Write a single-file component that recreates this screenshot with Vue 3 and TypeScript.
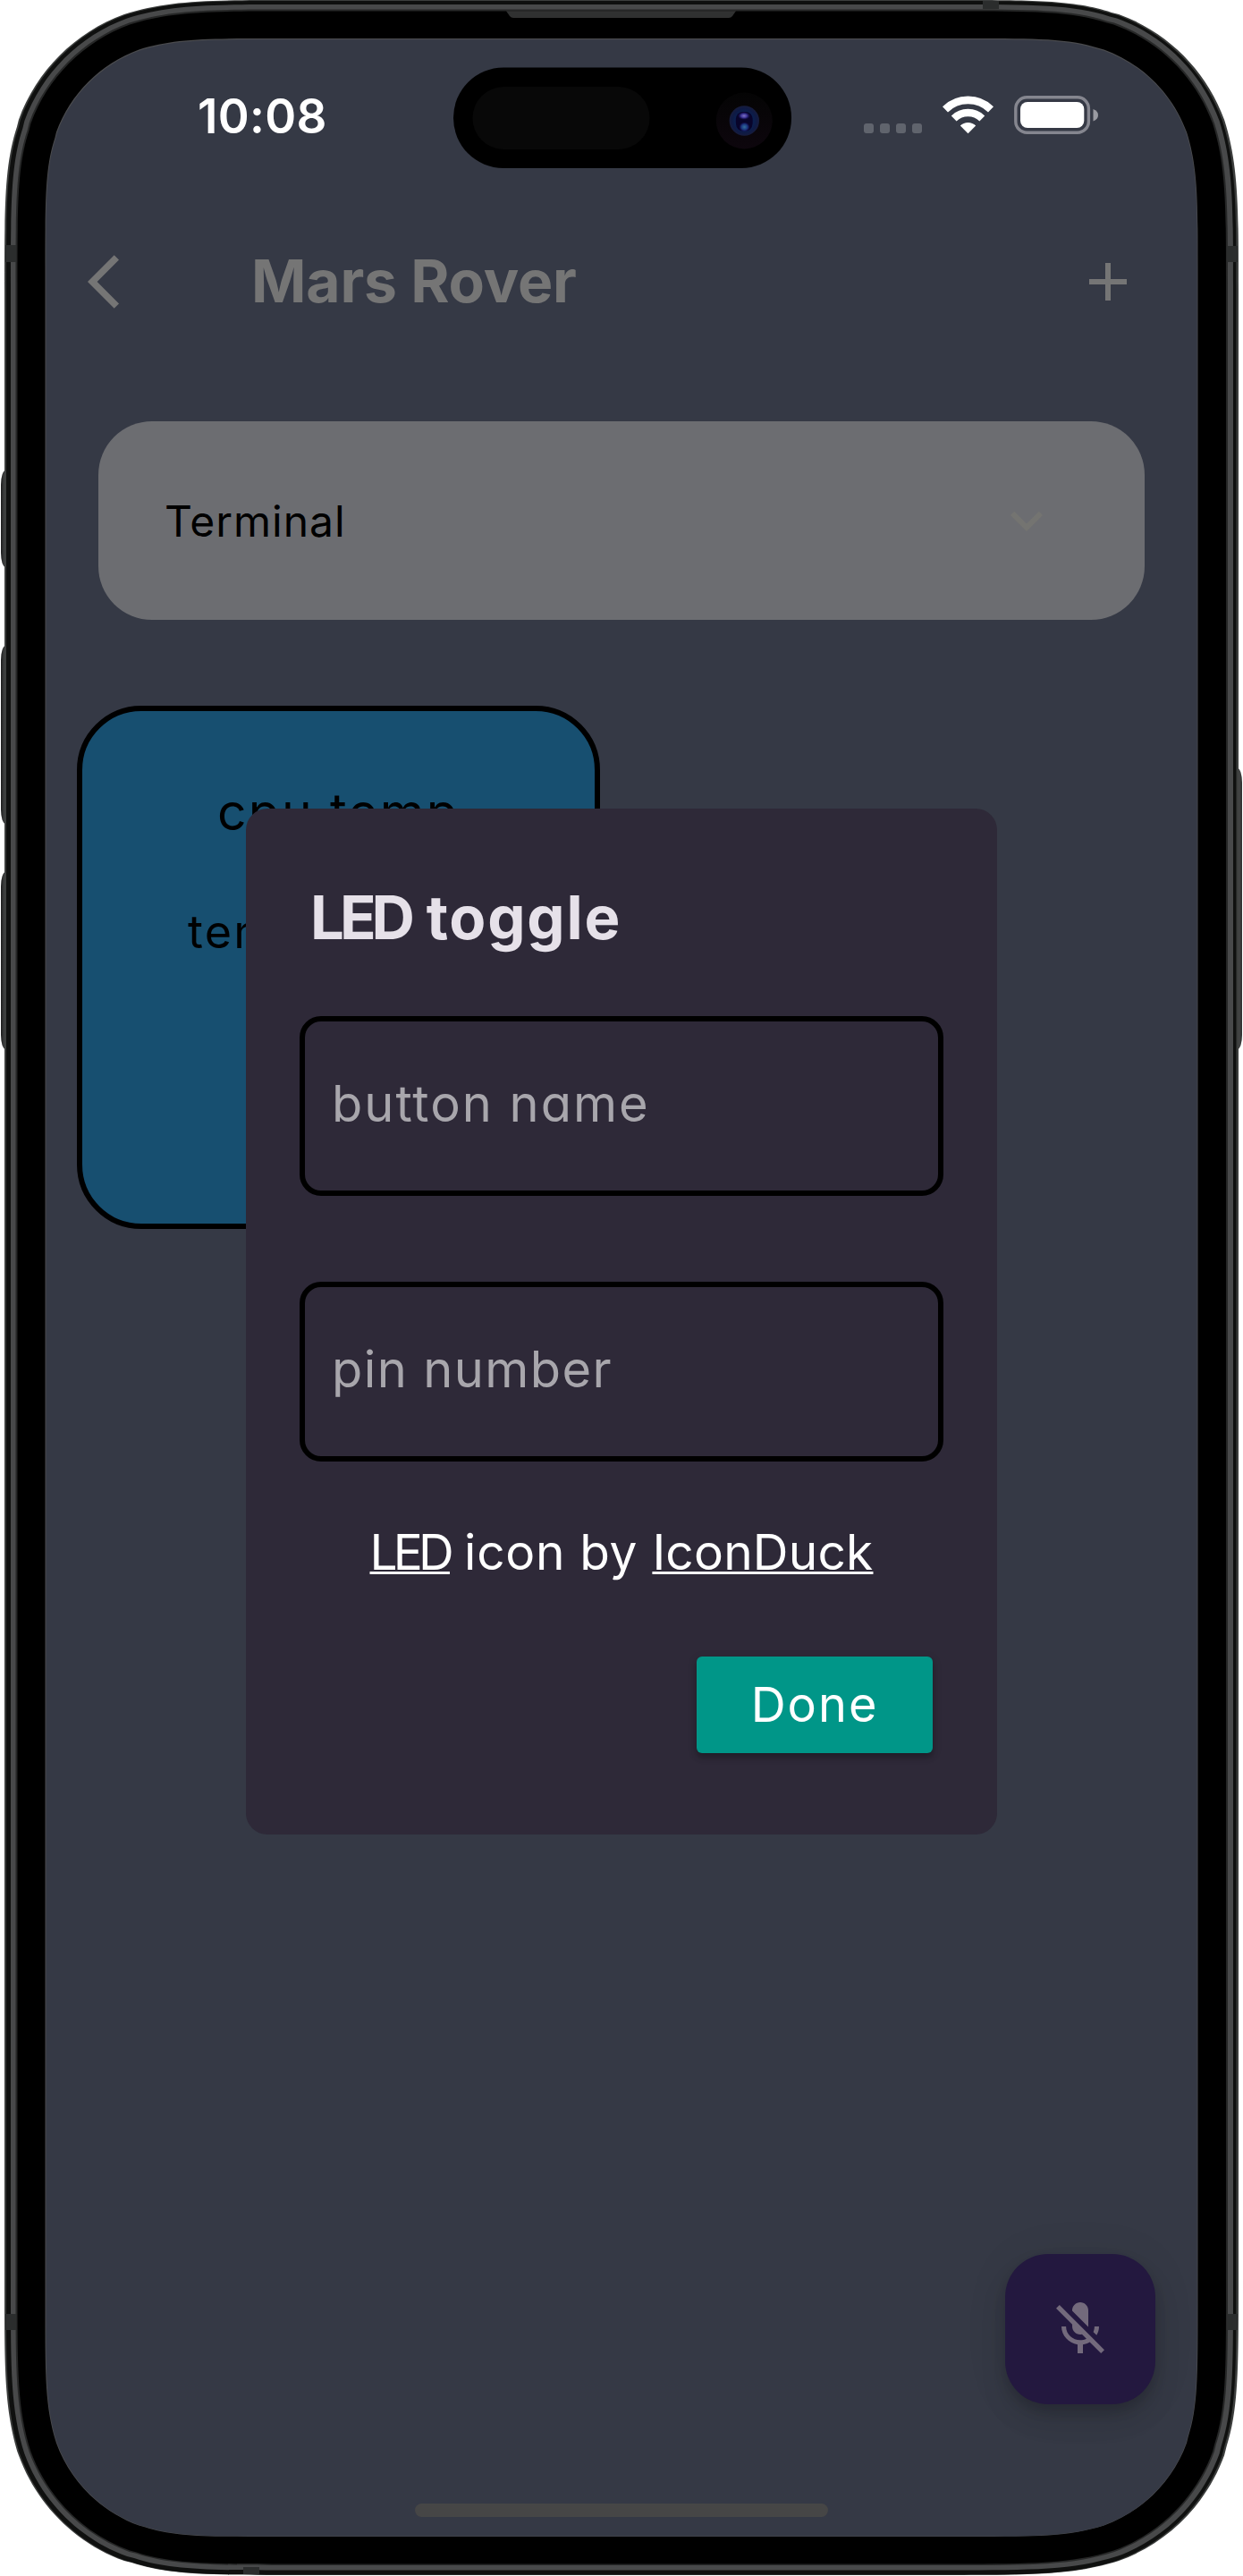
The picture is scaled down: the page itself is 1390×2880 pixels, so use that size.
<script setup lang="ts">
import { ref } from 'vue'

interface Layer {
  left: number
  top: number
  right: number
  bottom: number
  radius: number
  fill: string
}

// Rounded rectangle with continuous-curvature corners.
function squircle(l: Layer): string {
  const { left: x0, top: y0, right: x1, bottom: y1, radius: r } = l
  const corner = (cx: number, cy: number, ax: number, ay: number, bx: number, by: number): string => {
    const p = (a: number, b: number) =>
      `${(cx + ax * a * r + bx * b * r).toFixed(2)} ${(cy + ay * a * r + by * b * r).toFixed(2)}`
    return (
      `L${p(1.5287, 0)} C${p(1.0885, 0)} ${p(0.8684, 0)} ${p(0.6699, 0.0655)} L${p(0.6315, 0.0749)} ` +
      `C${p(0.3728, 0.1691)} ${p(0.1691, 0.3728)} ${p(0.0749, 0.6315)} ` +
      `C${p(0, 0.8684)} ${p(0, 1.0885)} ${p(0, 1.5287)} `
    )
  }
  const body =
    corner(x1, y0, -1, 0, 0, 1) +
    corner(x1, y1, 0, -1, -1, 0) +
    corner(x0, y1, 1, 0, 0, -1) +
    corner(x0, y0, 0, 1, 1, 0)
  return 'M' + body.slice(1) + 'Z'
}

const layers: Layer[] = [
  { left: 5, top: 0, right: 1385, bottom: 2879, radius: 212, fill: '#3c3e3d' },
  { left: 7, top: 1, right: 1382.5, bottom: 2878.5, radius: 211, fill: '#0f100f' },
  { left: 12, top: 5, right: 1379, bottom: 2873.5, radius: 206, fill: '#48494a' },
  { left: 17.5, top: 10.5, right: 1373, bottom: 2868, radius: 201, fill: '#262727' },
  { left: 19.5, top: 12.5, right: 1371, bottom: 2866.5, radius: 199, fill: '#000000' },
  { left: 50.5, top: 43, right: 1339.5, bottom: 2836, radius: 166, fill: '#4a4b4e' },
  { left: 51.5, top: 44.3, right: 1338.7, bottom: 2835.5, radius: 165, fill: '#353945' }
]

const keysLeft = [
  { y: 526, h: 108 },
  { y: 722, h: 199 },
  { y: 975, h: 198 }
]

const buttonName = ref('')
const pinNumber = ref('')
</script>

<template>
  <div class="device">
    <svg class="frame" viewBox="0 0 1390 2880" width="1390" height="2880" aria-hidden="true">
      <defs>
        <linearGradient id="side" x1="0" x2="1" y1="0" y2="0">
          <stop offset="0" stop-color="#1b1c1c" />
          <stop offset="0.5" stop-color="#4b4d4d" />
          <stop offset="1" stop-color="#303131" />
        </linearGradient>
        <radialGradient id="lens">
          <stop offset="0" stop-color="#0a0830" />
          <stop offset="0.5" stop-color="#0a0a3a" />
          <stop offset="0.62" stop-color="#0b1f4d" />
          <stop offset="0.8" stop-color="#0e1a45" />
          <stop offset="1" stop-color="#171c3c" />
        </radialGradient>
        <radialGradient id="glint-top">
          <stop offset="0" stop-color="#9a8fe8" />
          <stop offset="0.5" stop-color="#4a40b0" />
          <stop offset="1" stop-color="#1a1468" stop-opacity="0" />
        </radialGradient>
        <radialGradient id="glint-low">
          <stop offset="0" stop-color="#3f86b8" />
          <stop offset="0.6" stop-color="#1d3f90" />
          <stop offset="1" stop-color="#2a1880" stop-opacity="0" />
        </radialGradient>
        <linearGradient id="ring" x1="0" x2="0" y1="0" y2="1">
          <stop offset="0" stop-color="#040404" />
          <stop offset="1" stop-color="#0d060d" />
        </linearGradient>
      </defs>
      <rect v-for="k in keysLeft" :key="k.y" x="1" :y="k.y" width="10" :height="k.h" rx="5" ry="16" fill="url(#side)" />
      <rect x="1379" y="859" width="10" height="314" rx="5" ry="16" fill="url(#side)" />
      <path v-for="(l, i) in layers" :key="i" :d="squircle(l)" :fill="l.fill" />
      <g fill="#2b2d2d">
        <rect x="6" y="274" width="12" height="19" />
        <rect x="1372" y="275" width="12" height="18" />
        <rect x="6" y="2587" width="12" height="18" />
        <rect x="1372" y="2587" width="12" height="18" />
        <rect x="1099" y="1" width="18" height="9" />
        <rect x="272" y="2870" width="18" height="8" />
      </g>
      <path d="M566 12.3H823L819 18Q817.500 20 815 20H574Q571.500 20 570 18Z" fill="#303131" />
      <rect x="507" y="75.500" width="378" height="112.500" rx="56" fill="#000" />
      <rect x="528.500" y="97" width="198" height="70" rx="35" fill="#080808" />
      <circle cx="832.300" cy="135" r="31.500" fill="url(#ring)" />
      <circle cx="832.300" cy="135" r="16.700" fill="url(#lens)" />
      <rect x="823" y="125" width="18.500" height="21.500" rx="8" fill="#08042a" />
      <ellipse cx="832" cy="129.500" rx="7" ry="4.500" fill="url(#glint-top)" opacity="0.8" />
      <ellipse cx="832.500" cy="142" rx="6" ry="5.500" fill="url(#glint-low)" opacity="0.8" />
    </svg>

    <main class="screen">
      <div class="status">
        <time class="clock">10:08</time>
        <div class="signals">
          <span class="dots"><i v-for="n in 4" :key="n"></i></span>
          <svg class="wifi" width="58" height="43" viewBox="0 0 58 43">
            <g fill="none" stroke="#fff">
              <path d="M3 15.300A36.500 36.500 0 0 1 54 15.300" stroke-width="8.600" />
              <path d="M12.700 25.500A22.600 22.600 0 0 1 44.300 25.500" stroke-width="8.400" />
            </g>
            <path d="M28.500 42.200L19.800 33.500A12.400 12.400 0 0 1 37.200 33.500Z" fill="#fff" />
          </svg>
          <svg class="battery" width="95" height="43" viewBox="0 0 95 43">
            <rect x="1.800" y="1.800" width="81.600" height="39.400" rx="12.500" fill="none" stroke="#85868f" stroke-width="3.400" />
            <rect x="7" y="7" width="71.300" height="29" rx="8" fill="#fff" />
            <path d="M88.500 15Q94 17 94 21.700T88.500 28.500Z" fill="#9a9ba2" />
          </svg>
        </div>
      </div>

      <header class="bar">
        <svg class="back" width="72" height="72" viewBox="0 0 24 24">
          <path d="M11.670 3.870L9.900 2.100 0 12l9.900 9.900 1.770-1.770L3.540 12z" fill="#757575" />
        </svg>
        <h1>Mars Rover</h1>
        <svg width="72" height="72" viewBox="0 0 24 24">
          <path d="M19 13h-6v6h-2v-6H5v-2h6V5h2v6h6v2z" fill="#757575" />
        </svg>
      </header>

      <section class="picker">
        <span>Terminal</span>
        <svg width="72" height="72" viewBox="0 0 24 24">
          <path d="M7.410 8.590L12 13.170l4.590-4.580L18 10l-6 6-6-6z" fill="#747471" />
        </svg>
      </section>

      <section class="tile">
        <p class="tile-name">cpu temp</p>
        <p class="tile-value">tem</p>
      </section>

      <footer class="bottom">
        <button class="mic" aria-label="Microphone off">
          <svg width="72" height="72" viewBox="0 0 24 24">
            <path
              d="M19 11h-1.700c0 .74-.16 1.430-.43 2.050l1.230 1.230c.56-.98.9-2.090.9-3.280zm-4.020.17c0-.06.02-.11.02-.17V5c0-1.660-1.340-3-3-3S9 3.340 9 5v.18l5.980 5.990zM4.270 3L3 4.270l6.010 6.010V11c0 1.660 1.330 3 2.990 3 .22 0 .44-.03.65-.08l1.660 1.660c-.71.33-1.500.52-2.310.52-2.760 0-5.300-2.100-5.300-5.100H5c0 3.410 2.720 6.230 6 6.720V21h2v-3.280c.91-.13 1.770-.45 2.540-.9L19.730 21 21 19.730 4.270 3z"
              fill="#736a7c"
            />
          </svg>
        </button>
        <div class="home"></div>
      </footer>
    </main>

    <form class="dialog" @submit.prevent>
      <h2><span class="caps">LED</span> toggle</h2>
      <input v-model="buttonName" class="field name" placeholder="button name" />
      <input v-model="pinNumber" class="field pin" placeholder="pin number" />
      <p class="credit"><a class="caps">LED</a> icon by <a class="site">IconDuck</a></p>
      <button class="done">Done</button>
    </form>
  </div>
</template>

<style>
body {
  margin: 0;
  background: #fff;
}
</style>

<style scoped>
.device {
  position: relative;
  width: 1390px;
  height: 2880px;
  overflow: hidden;
  font-family: Inter, 'Liberation Sans', sans-serif;
}
.frame {
  position: absolute;
  inset: 0;
  display: block;
}
.screen {
  position: relative;
  box-sizing: border-box;
  width: 1390px;
  height: 2880px;
  padding: 44px 51px 45px;
  display: flex;
  flex-direction: column;
}
h1,
h2,
p {
  margin: 0;
}
.status {
  height: 166px;
  display: flex;
  justify-content: space-between;
  align-items: flex-start;
  padding: 54px 110px 0 170px;
  box-sizing: border-box;
}
.clock {
  color: #fff;
  font-size: 53px;
  line-height: 64px;
  font-weight: 600;
  letter-spacing: 0.3px;
}
.signals {
  display: flex;
  align-items: flex-start;
  padding-top: 9px;
}
.dots {
  display: flex;
  gap: 7px;
  margin: 31px 23px 0 0;
}
.dots i {
  width: 11px;
  height: 11px;
  border-radius: 3px;
  background: #60646d;
}
.wifi {
  margin-right: 22px;
}
.bar {
  height: 209px;
  display: flex;
  align-items: center;
  padding: 0 64px 0 47px;
}
.bar h1 {
  flex: 1;
  margin: -2px 0 0 111px;
  color: #757575;
  font-size: 66px;
  line-height: 80px;
  font-weight: 700;
  letter-spacing: -0.2px;
}
.picker {
  margin: 52px 59px 0;
  box-sizing: border-box;
  height: 222px;
  border-radius: 60px;
  background: #6c6d71;
  display: flex;
  align-items: center;
  justify-content: space-between;
  padding: 0 96px 0 74px;
  color: #000;
  font-size: 48px;
  letter-spacing: 1px;
}
.tile {
  margin: 96px 0 0 35px;
  box-sizing: border-box;
  width: 585px;
  height: 585px;
  border: 6px solid #000;
  border-radius: 72px;
  background: #174f70;
  text-align: center;
  color: #000;
}
.tile-name {
  padding-top: 80px;
  font-size: 57px;
  line-height: 66px;
  letter-spacing: 2.2px;
}
.tile-value {
  margin: 69px 0 0 118px;
  font-size: 52px;
  line-height: 64px;
  letter-spacing: 2.2px;
  text-align: left;
}
.bottom {
  margin-top: auto;
  display: flex;
  flex-direction: column;
  align-items: center;
  padding-bottom: 21px;
}
.mic {
  align-self: flex-end;
  width: 168px;
  height: 168px;
  margin: 0 47px 111px 0;
  padding: 0;
  border: 0;
  border-radius: 48px;
  background: #23183f;
  display: flex;
  align-items: center;
  justify-content: center;
  box-shadow:
    0 9px 15px -3px rgba(0, 0, 0, 0.16),
    0 18px 30px rgba(0, 0, 0, 0.1),
    0 3px 54px rgba(0, 0, 0, 0.06);
}
.home {
  width: 462px;
  height: 15px;
  border-radius: 8px;
  background: #464646;
}
.dialog {
  position: absolute;
  left: 275px;
  top: 904px;
  width: 840px;
  height: 1146.500px;
  box-sizing: border-box;
  padding: 0 60px;
  border-radius: 24px;
  background: #2e2938;
  display: flex;
  flex-direction: column;
  font-feature-settings: 'cv11';
}
.dialog h2 {
  margin: 82px 0 0 12px;
  color: #e6e1e9;
  font-size: 67px;
  line-height: 80px;
  font-weight: 700;
  letter-spacing: 1.8px;
  word-spacing: 0;
  white-space: nowrap;
}
.dialog h2 .caps {
  letter-spacing: -5px;
}
.field {
  box-sizing: border-box;
  width: 720px;
  height: 201px;
  padding: 0 30px 4px;
  border: 6px solid #000;
  border-radius: 24px;
  background: transparent;
  color: #fff;
  font-family: inherit;
  font-feature-settings: inherit;
  font-size: 56px;
  font-weight: 400;
  letter-spacing: 2px;
}
.field::placeholder {
  color: #a8a6ac;
  opacity: 1;
}
.name {
  margin-top: 69.500px;
}
.pin {
  margin-top: 96px;
  letter-spacing: 1.4px;
}
.credit {
  margin-top: 68px;
  color: #fff;
  font-size: 55px;
  line-height: 66px;
  font-weight: 400;
  letter-spacing: 0.7px;
  text-align: center;
  white-space: nowrap;
}
.credit a {
  text-decoration: underline;
  text-decoration-thickness: 3px;
  text-underline-offset: 2px;
  text-decoration-skip-ink: none;
}
.credit .caps {
  letter-spacing: -4.800px;
}
.credit .site {
  letter-spacing: 0.2px;
}
.done {
  align-self: flex-end;
  width: 264px;
  height: 108px;
  margin: 84px 12px 0 0;
  padding: 0;
  border: 0;
  border-radius: 6px;
  background: #009688;
  color: #fff;
  font-family: inherit;
  font-feature-settings: inherit;
  font-size: 54px;
  font-weight: 400;
  letter-spacing: 2px;
  box-shadow:
    0 5px 6px rgba(0, 0, 0, 0.2),
    0 3px 12px rgba(0, 0, 0, 0.12);
}
</style>
